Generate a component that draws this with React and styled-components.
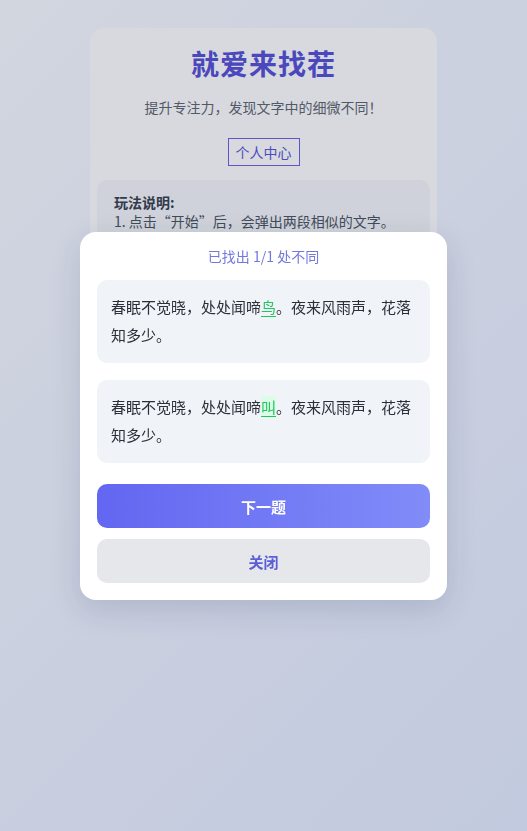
import React from 'react';
import styled, { createGlobalStyle } from 'styled-components';

const GlobalStyle = createGlobalStyle`
  * {
    box-sizing: border-box;
  }

  html,
  body {
    margin: 0;
    padding: 0;
  }

  body {
    font-family: 'Noto Sans CJK SC', 'Noto Sans', sans-serif;
    min-height: 831px;
    background: linear-gradient(135deg, #f5f8ff 0%, #e2eaff 100%);
  }
`;

const Page = styled.div`
  min-height: 831px;
  padding-top: 28px;
  display: flex;
  flex-direction: column;
  align-items: center;
`;

const Card = styled.div`
  width: 347px;
  background: #fbfcff;
  border-radius: 14px;
  padding: 16px 7px 16px;
  display: flex;
  flex-direction: column;
  align-items: center;
`;

const Title = styled.h1`
  margin: 0;
  font-size: 28px;
  line-height: 38px;
  font-weight: 700;
  color: #5650d6;
  letter-spacing: 1px;
`;

const Subtitle = styled.p`
  margin: 15px 0 0;
  font-size: 14px;
  line-height: 20px;
  color: #5f6673;
`;

const OutlineButton = styled.button`
  margin-top: 21px;
  padding: 0 7px;
  height: 28px;
  border: 1px solid #6a63e6;
  background: transparent;
  color: #5a54d8;
  font: 400 14px/26px 'Noto Sans CJK SC', sans-serif;
`;

const Rules = styled.div`
  align-self: stretch;
  margin-top: 14px;
  background: #f1f4f9;
  border-radius: 10px;
  padding: 13px 17px;
  font-size: 14px;
  line-height: 19px;
  color: #4b5563;

  strong {
    display: block;
    color: #374151;
  }

  p {
    margin: 0;
  }
`;

const Overlay = styled.div`
  position: fixed;
  inset: 0;
  background: rgba(15, 23, 42, 0.15);
  display: flex;
  align-items: center;
  justify-content: center;
`;

const Modal = styled.div`
  width: 367px;
  background: #ffffff;
  border-radius: 16px;
  padding: 14px 17px 17px;
  box-shadow: 0 10px 30px rgba(30, 41, 80, 0.15);
  display: flex;
  flex-direction: column;
`;

const Status = styled.div`
  text-align: center;
  font-size: 14px;
  line-height: 20px;
  color: #7478dc;
  margin-bottom: 14px;
`;

const Passage = styled.div`
  background: #f0f3f8;
  border-radius: 10px;
  padding: 13px 14px 14px;
  font-size: 15px;
  line-height: 28px;
  color: #2b2f38;
  margin-bottom: ${props => (props.last ? '21px' : '17px')};
`;

const Diff = styled.span`
  color: #22c55e;
  text-decoration: underline;
  text-underline-offset: 3px;
  background: ${props => (props.marked ? '#dcfce7' : 'transparent')};
`;

const ActionButton = styled.button`
  height: 44px;
  border: none;
  border-radius: 10px;
  font: 700 15px/44px 'Noto Sans CJK SC', sans-serif;
  cursor: pointer;
  background: ${props =>
    props.primary
      ? 'linear-gradient(90deg, #6366f1 0%, #818cf8 100%)'
      : '#e5e7eb'};
  color: ${props => (props.primary ? '#ffffff' : '#5b5fd6')};
  margin-bottom: ${props => (props.primary ? '11px' : '0')};
`;

function App() {
  return (
    <>
      <GlobalStyle />
      <Page>
        <Card>
          <Title>就爱来找茬</Title>
          <Subtitle>提升专注力，发现文字中的细微不同！</Subtitle>
          <OutlineButton type="button">个人中心</OutlineButton>
          <Rules>
            <strong>玩法说明:</strong>
            <p>1. 点击“开始”后，会弹出两段相似的文字。</p>
            <p>2. 找出两段文字中不同的字并点击。</p>
            <p>3. 全部找出后即可进入下一题。</p>
          </Rules>
        </Card>
      </Page>
      <Overlay>
        <Modal>
          <Status>已找出 1/1 处不同</Status>
          <Passage>
            春眠不觉晓，处处闻啼<Diff>鸟</Diff>。夜来风雨声，花落知多少。
          </Passage>
          <Passage last>
            春眠不觉晓，处处闻啼<Diff marked>叫</Diff>。夜来风雨声，花落知多少。
          </Passage>
          <ActionButton type="button" primary>
            下一题
          </ActionButton>
          <ActionButton type="button">关闭</ActionButton>
        </Modal>
      </Overlay>
    </>
  );
}

export default App;
